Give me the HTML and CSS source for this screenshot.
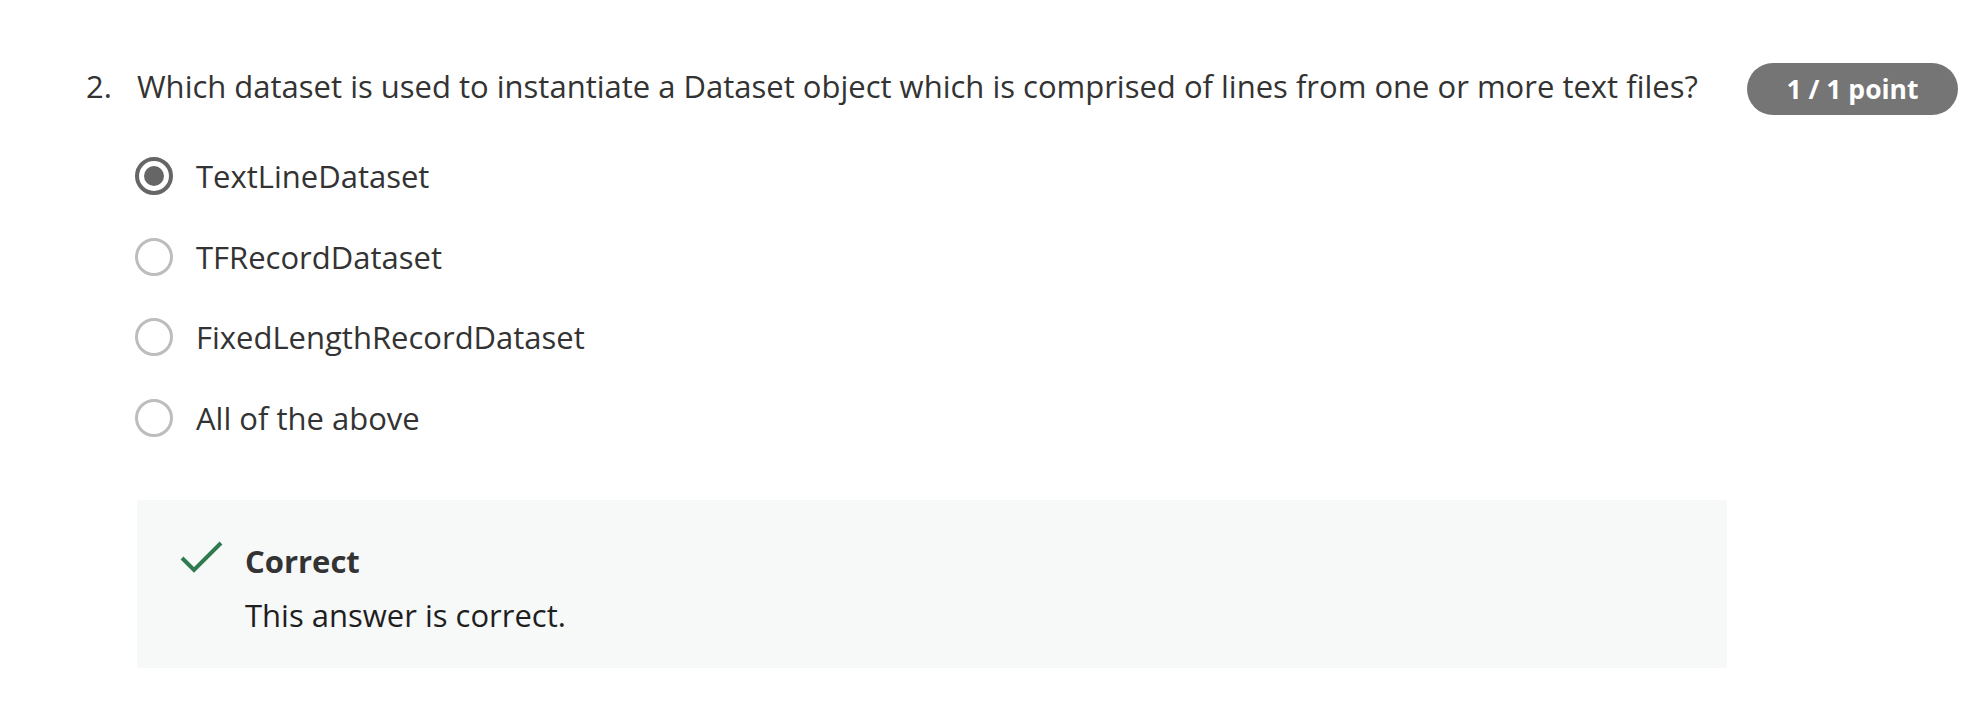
FILE: index.html
```html
<!DOCTYPE html>
<html lang="en">
<head>
<meta charset="utf-8">
<title>Quiz question</title>
<link rel="stylesheet" href="styles.css">
</head>
<body>
<div class="question">
  <div class="q-head">
    <span class="q-num">2.</span>
    <p class="q-text">Which dataset is used to instantiate a Dataset object which is comprised of lines from one or more text files?</p>
    <span class="badge">1 / 1 point</span>
  </div>
  <ul class="options">
    <li class="option"><span class="radio checked"></span><span class="opt-label">TextLineDataset</span></li>
    <li class="option"><span class="radio"></span><span class="opt-label">TFRecordDataset</span></li>
    <li class="option"><span class="radio"></span><span class="opt-label">FixedLengthRecordDataset</span></li>
    <li class="option"><span class="radio"></span><span class="opt-label">All of the above</span></li>
  </ul>
  <div class="feedback">
    <svg class="check" width="44" height="34" viewBox="0 0 44 34"><path d="M2 18 L14 30 L41 3" fill="none" stroke="#2f7a4e" stroke-width="4"/></svg>
    <div class="fb-body">
      <div class="fb-title">Correct</div>
      <div class="fb-text">This answer is correct.</div>
    </div>
  </div>
</div>
</body>
</html>
```
FILE: styles.css
```css
html, body {
  margin: 0;
  padding: 0;
  background: #ffffff;
}
body {
  font-family: "Open Sans", "Noto Sans", sans-serif;
  color: #333333;
  font-size: 31px;
}
.question {
  padding: 65px 28px 0 86px;
}
.q-head {
  display: flex;
  align-items: flex-start;
}
.q-num {
  width: 51px;
  flex: none;
  line-height: 42px;
}
.q-text {
  margin: 0;
  flex: 1;
  line-height: 42px;
}
.badge {
  flex: none;
  width: 211px;
  height: 52px;
  margin: -2px 0 -8px;
  border-radius: 26px;
  background: #757575;
  color: #ffffff;
  font-weight: 700;
  font-size: 26.5px;
  display: flex;
  align-items: center;
  justify-content: center;
}
.options {
  list-style: none;
  margin: 48px 0 0 49px;
  padding: 0;
  display: flex;
  flex-direction: column;
  gap: 38.5px;
}
.option {
  display: flex;
  align-items: center;
  height: 42px;
}
.radio {
  box-sizing: border-box;
  width: 38px;
  height: 38px;
  border-radius: 50%;
  border: 3px solid #bdbdbd;
  flex: none;
  margin-right: 23px;
  display: flex;
  align-items: center;
  justify-content: center;
}
.radio.checked {
  border: 4px solid #666666;
}
.radio.checked::after {
  content: "";
  width: 20px;
  height: 20px;
  border-radius: 50%;
  background: #666666;
}
.opt-label {
  line-height: 42px;
}
.feedback {
  margin: 61.5px 231px 0 51px;
  background: #f7f9f8;
  height: 168px;
  box-sizing: border-box;
  padding: 40px 0 0 43px;
  display: flex;
  align-items: flex-start;
}
.check {
  flex: none;
  margin-right: 21px;
}
.fb-title {
  font-weight: 700;
  line-height: 42px;
}
.fb-text {
  margin-top: 12px;
  line-height: 42px;
  color: #1f1f1f;
}
```
